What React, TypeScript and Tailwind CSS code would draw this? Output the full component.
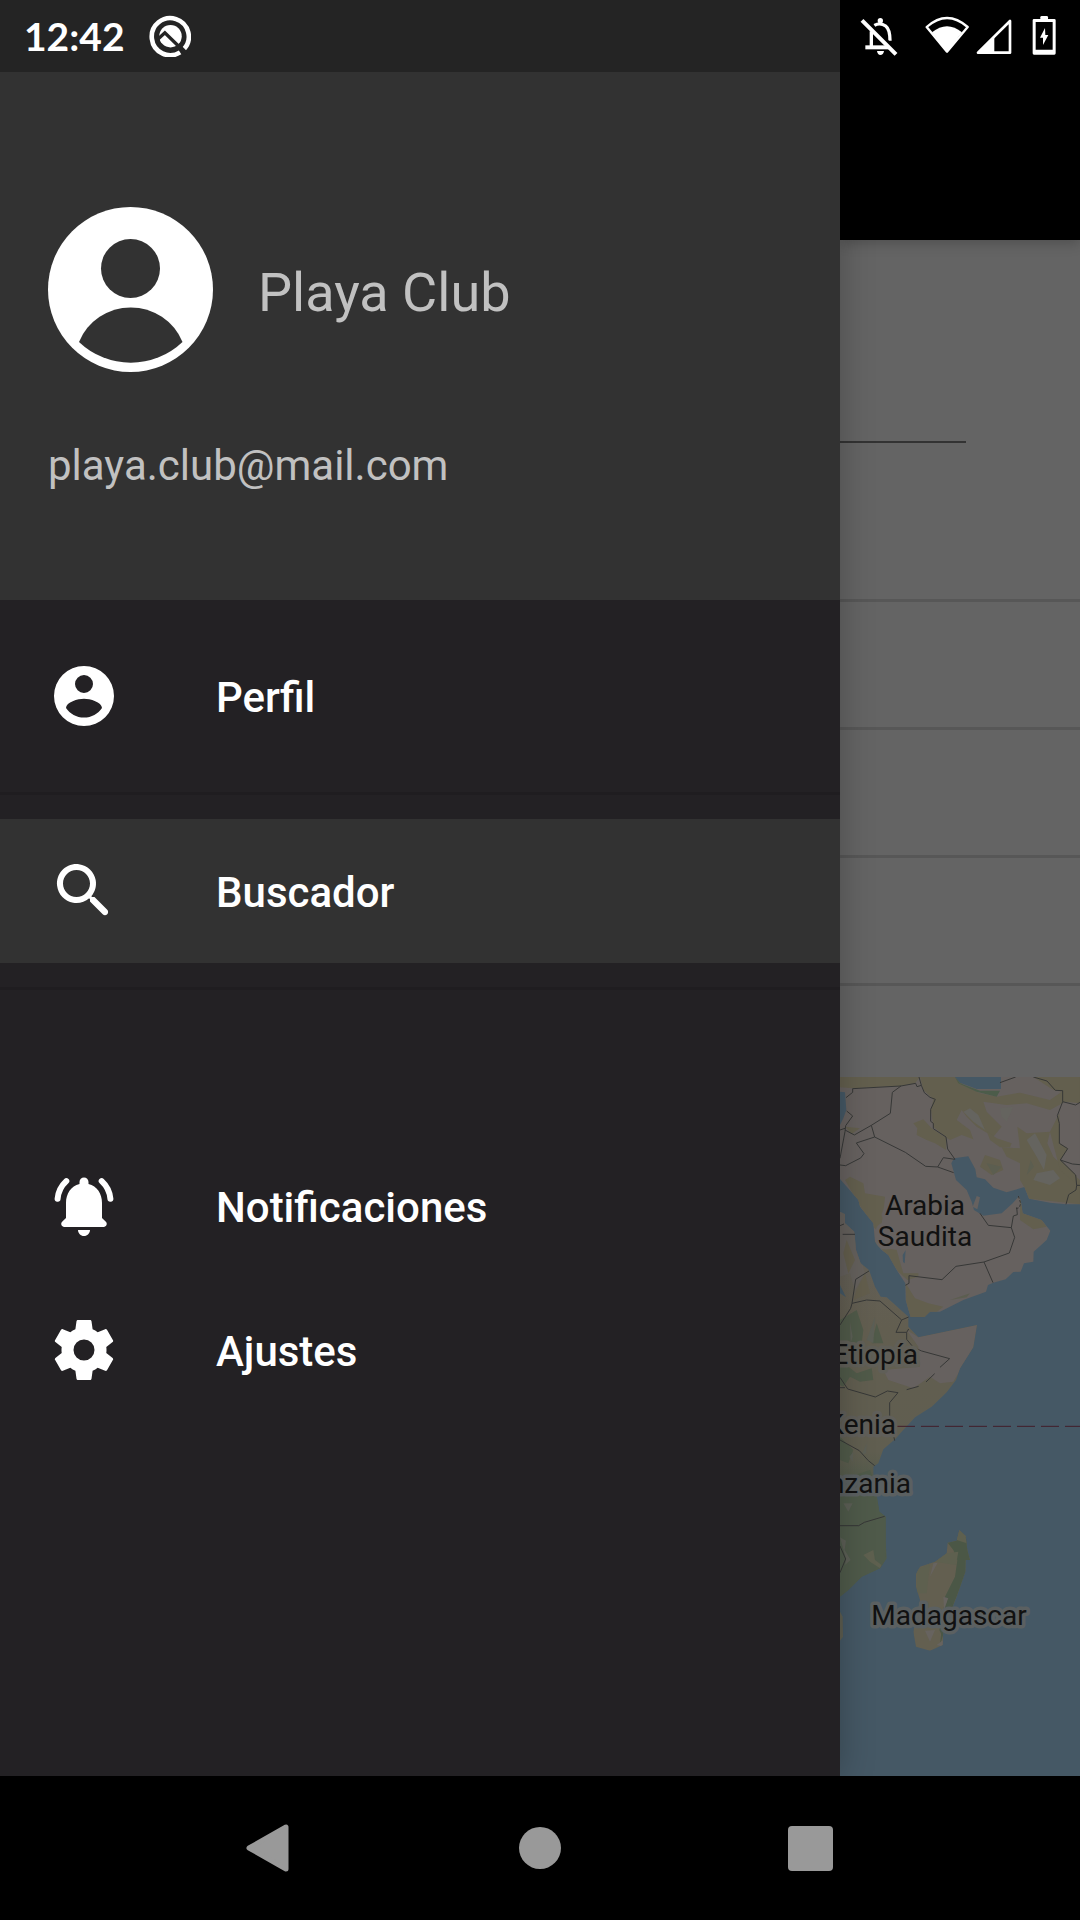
import type { ReactNode } from "react";

function AssistantIcon() {
  return (
    <svg viewBox="443 43 127 127" className="size-[42px]" fill="none" aria-hidden="true">
      <path d="M548 147 A56 56 0 1 0 537 156" stroke="#fff" strokeWidth="14" />
      <circle cx="508" cy="107" r="34" fill="#fff" />
      <path d="M468 118 L491 97 L556 160" stroke="#242424" strokeWidth="10" />
      <path d="M538 141 L556 159" stroke="#242424" strokeWidth="12" />
    </svg>
  );
}

function MutedBellIcon() {
  return (
    <svg viewBox="122 48 114 120" className="h-10 w-[38px]" fill="none" stroke="#fff" aria-hidden="true">
      <path d="M156 94 V138 M165 76 Q183 66 199 78 Q212 88 212 122" strokeWidth="10" />
      <path d="M138 142 H208" strokeWidth="12" />
      <circle cx="183" cy="62" r="8" fill="#fff" stroke="none" />
      <path d="M173 153 H194 Q192 165 183 165 Q175 165 173 153Z" fill="#fff" stroke="none" />
      <path d="M136 56 L236 156" stroke="#000" strokeWidth="9" />
      <path d="M128 61 L230 163" strokeWidth="12" />
    </svg>
  );
}

function WifiIcon() {
  return (
    <svg viewBox="316 48 132 120" className="h-10 w-11" aria-hidden="true">
      <path d="M321 81 Q382 27 444 81 L382 155Z" fill="none" stroke="#fff" strokeWidth="7" strokeLinejoin="round" />
      <path d="M337 97 Q382 60 427 97 L382 156Z" fill="#fff" />
    </svg>
  );
}

function SignalIcon() {
  return (
    <svg viewBox="468 48 108 120" className="h-10 w-9" aria-hidden="true">
      <path d="M474 158 L570 63 V158Z" fill="none" stroke="#fff" strokeWidth="8" strokeLinejoin="round" />
      <path d="M474 158 L523 109 V158Z" fill="#fff" />
    </svg>
  );
}

function BatteryIcon() {
  return (
    <svg viewBox="637 48 72 120" className="h-10 w-6" aria-hidden="true">
      <path d="M662 60 V52 Q662 48 666 48 H681 Q685 48 685 52 V60Z" fill="#fff" />
      <path
        fillRule="evenodd"
        d="M643 57 H704 Q708 57 708 61 V160 Q708 164 704 164 H643 Q639 164 639 160 V61 Q639 57 643 57Z M648 66 V149 H699 V66Z"
        fill="#fff"
      />
      <path d="M676 84 L661 113 H670 V135 L686 105 H677Z" fill="#fff" />
    </svg>
  );
}

function Avatar() {
  return (
    <svg viewBox="0 0 165 165" className="size-[165px] shrink-0" role="img" aria-label="Avatar">
      <circle cx="82.5" cy="82.5" r="82.5" fill="#fff" />
      <circle cx="82.5" cy="61.5" r="29.5" fill="#323232" />
      <path d="M31 135 A56 56 0 0 1 134.500 135 A75 75 0 0 1 31 135Z" fill="#323232" />
    </svg>
  );
}

function MenuIcon({ children }: { children: ReactNode }) {
  return (
    <svg viewBox="0 0 24 24" className="size-[72px] shrink-0" fill="currentColor" aria-hidden="true">
      {children}
    </svg>
  );
}

function MenuItem({ label, active, children }: { label: string; active?: boolean; children: ReactNode }) {
  return (
    <button
      type="button"
      aria-current={active ? "page" : undefined}
      className={`flex h-36 w-full items-center gap-24 px-12 text-left text-[42px] leading-[48px] font-medium text-white ${
        active ? "bg-[#323232]" : ""
      }`}
    >
      <MenuIcon>{children}</MenuIcon>
      <span className="pt-1">{label}</span>
    </button>
  );
}

function Divider() {
  return <hr className="my-6 h-[3px] border-0 bg-[#1f1d20]" />;
}

function WorldMap() {
  return (
    <svg
      viewBox="0 0 240 699"
      preserveAspectRatio="xMinYMin slice"
      className="min-h-[600px] w-full flex-1 bg-[#455865]"
      role="img"
      aria-label="Mapa"
    >
      <defs>
        <clipPath id="asia">
          <path d="M60 51 H780 V433 L738 433 L690 428 L627 416 L613 381 L560 397 L520 383 L495 358 L470 352 L466 328 L445 289 L402 295 L394 310 L408 360 L440 390 L455 425 L462 450 L490 467 L545 460 L578 430 L597 408 L603 425 L608 460 L665 480 L691 512 L680 540 L641 575 L640 605 L612 610 L602 635 L580 636 L557 658 L520 668 L504 675 L498 695 L430 720 L360 755 L330 755 L313 772 L272 772 L257 720 L256 670 L230 630 L205 585 L185 570 L165 545 L160 490 L120 440 L115 420 L60 357Z" />
        </clipPath>
        <clipPath id="africa">
          <path d="M60 455 L75 462 V490 L103 515 L108 570 L122 610 L147 630 L165 680 L182 710 L200 712 L265 770 V800 L295 832 L471 795 L460 862 L420 925 L408 960 L380 997 L335 1040 L285 1072 L245 1115 L225 1138 L190 1168 L175 1210 L160 1220 L160 1240 L172 1320 L178 1355 L197 1370 L197 1450 L200 1495 L180 1525 L125 1550 L85 1590 L60 1610Z" />
        </clipPath>
        <clipPath id="madagascar">
          <path d="M418 1410 L437 1428 L442 1470 L450 1500 H437 L436 1535 L410 1610 L370 1710 L368 1755 L330 1772 L288 1760 L280 1715 L300 1620 L288 1580 V1542 L300 1520 L345 1505 L380 1480 L383 1448 L410 1442Z" />
        </clipPath>
        <linearGradient id="africaLand" x1="0" y1="0" x2="0" y2="1">
          <stop offset="0" stopColor="#64605b" />
          <stop offset="0.3" stopColor="#625e50" />
          <stop offset="0.62" stopColor="#605e50" />
          <stop offset="0.72" stopColor="#4f5a4a" />
          <stop offset="1" stopColor="#515b49" />
        </linearGradient>
      </defs>
      <g transform="translate(-20 -17) scale(0.333333)">
        <g clipPath="url(#asia)">
          <rect x="60" y="51" width="720" height="740" fill="#66615f" />
          <g fill="#635f4e">
            <path d="M60 51 H300 L285 70 L240 78 L180 80 L100 85 L60 82Z" />
            <path d="M300 51 H405 L430 75 L480 100 L530 110 L600 98 L690 120 L725 95 L700 90 L640 51 H780 V130 L735 125 L690 150 L620 130 L560 135 L490 125 L500 155 L545 200 L520 230 L470 200 L440 170 L425 150 L410 180 L450 210 L460 238 L425 225 L390 240 L375 230 L340 200 L333 150 L340 118 L310 90Z" />
            <path d="M280 190 L310 178 L335 205 L380 235 L378 270 L345 250 L320 240 L290 225 L292 205Z" />
            <path d="M500 212 L530 235 L575 250 L570 262 L540 262 L510 240Z" />
            <path d="M592 200 L620 220 L690 215 L682 250 L700 290 L730 320 L780 360 V433 L627 416 L612 380 L600 360 V310 L560 290 L545 262 L600 265Z" />
            <path d="M690 215 L718 160 V250 L744 265 L722 300 L768 345 L780 380 L720 330Z" />
            <path d="M495 285 L540 300 L550 330 L515 345 L480 320Z" />
            <path d="M75 360 L90 350 L130 370 L135 400 L195 410 L190 460 L180 520 L160 500 L115 430Z" />
            <path d="M180 560 L230 570 L250 640 L295 640 V650 L262 660 L235 635Z" />
            <path d="M257 670 L285 715 L325 730 L370 740 L330 772 H260Z" />
            <path d="M600 410 L610 460 L665 480 L680 500 L640 508 L600 480Z" />
            <path d="M75 200 L120 205 L95 222Z" />
          </g>
          <g fill="#65645f">
            <path d="M620 240 L645 220 L680 285 L672 330 L650 290Z" />
            <path d="M650 340 L700 330 L720 355 L690 375 L640 360Z" />
            <path d="M430 155 L450 145 L475 165 L495 210 L460 185Z" />
            <path d="M540 145 L580 140 L560 185 L545 170Z" />
          </g>
          <path d="M500 310 L545 320 L520 345Z M620 345 L632 300 L642 320Z M390 720 L450 700 L440 712Z" fill="#5c5e50" />
          <path d="M405 51 H543 V87 H470 L420 68Z M60 95 L75 97 L79 150 L70 175 L60 195Z M248 585 L257 570 L254 610 L249 606Z" fill="#455865" />
          <path d="M405 51 L420 70 L480 92 L540 92 L530 110 L470 95 L415 70Z" fill="#4c5c4a" />
        </g>
        <g clipPath="url(#africa)">
          <rect x="60" y="450" width="420" height="1170" fill="url(#africaLand)" />
          <path d="M60 450 L100 510 L135 640 L105 690 L90 640 L60 650Z" fill="#64605c" />
          <path d="M80 540 L105 600 L85 640 L70 580Z M135 640 L150 700 L100 720 L110 690Z" fill="#635e4d" />
          <path d="M260 810 L295 832 L471 795 L460 862 L400 965 L360 970 L330 950 L280 985 L205 960 L190 930 L300 920 L295 860Z" fill="#66615f" />
          <path d="M60 780 L110 750 L130 810 L125 850 H60Z M155 850 L170 790 L190 850Z M60 900 L110 940 L155 925 L160 960 L120 965 L90 950 L70 980 L60 975Z M60 1130 L100 1170 L85 1210 L60 1200Z" fill="#505a49" />
          <path d="M60 1260 L150 1230 L200 1370 L197 1530 L60 1610Z" fill="#4f5a4a" />
          <path d="M90 785 L98 830 L92 850Z M140 840 L165 770 L160 850Z M70 1330 L98 1330 L85 1355Z M60 1432 L78 1442 L74 1470 L92 1500 L75 1515 L78 1497Z M88 1190 L100 1175 L98 1205Z M125 1185 L140 1150 L138 1180Z" fill="#5c5f56" />
          <path d="M130 1485 L160 1470 L165 1500 L185 1515 L180 1525 L150 1505Z" fill="#5e604f" />
          <path d="M60 675 L78 712 L60 700Z" fill="#455865" />
        </g>
        <g clipPath="url(#madagascar)">
          <rect x="270" y="1400" width="190" height="380" fill="#635f50" />
          <path d="M383 1448 L440 1430 L455 1505 L430 1560 L390 1660 L360 1755 L375 1610 L405 1550 L412 1500 L400 1470Z" fill="#4b5746" />
          <path d="M410 1405 H440 V1450 L410 1440Z M345 1505 L380 1480 L415 1475 L408 1515Z M290 1530 L330 1510 L320 1600 H290Z" fill="#5e604f" />
          <path d="M340 1510 L353 1508 L330 1550Z M315 1712 L345 1710 L330 1745Z M370 1610 L385 1615 L372 1650Z M350 1755 L370 1740 V1760Z" fill="#67635f" />
          <path d="M385 1615 L400 1640 L365 1725 L358 1710Z" fill="#4b5746" />
        </g>
        <path d="M60 1655 L68 1670 L69 1730 L60 1742Z" fill="#5e5e50" />
        <path d="M458 440 L470 408 L480 412 L472 448Z" fill="#66615f" />
        <g fill="none" stroke="#363736" strokeWidth="3">
          <path d="M78 113 L98 97 V86 L243 78 L217 97 L211 160 L154 196 L103 225 L75 210 M243 78 L287 70 L291 80 L304 76 L297 51 M304 76 L313 98 L330 112 L346 118 L332 148 V184 L340 190 V206 L378 231 L383 267 L405 298 L370 293 L353 321 L317 319 L256 277 L164 231 L154 196 M353 321 L401 338 M164 231 L109 249 L132 281 L122 294 L77 317 L60 315 M80 153 L98 168 L77 197 L75 215 L60 295 M60 210 L75 205" />
          <path d="M540 68 L587 51 M640 51 L681 63 L706 91 L728 92 V125 L712 167 L718 190 V250 L743 266 L721 300 L767 345 L770 376 H780 M770 376 L768 390 L746 404 L738 433 M728 125 L767 135 L780 127 M721 300 L757 312 L780 314" />
          <path d="M480 460 L505 496 L574 503 L584 532 L568 579 L492 606 L408 619 L366 659 L267 647 V670 L256 676 M492 606 L519 668 M574 503 L580 468 L592 464 L590 442" />
          <path d="M595 408 L602 430 L598 443 L588 446" strokeDasharray="8 5" />
          <path d="M60 497 L72 492 M68 523 H105 M147 633 L107 658 L96 730 L92 745 L60 795 M96 730 L140 720 L180 723 L245 780 L266 771 M245 780 L228 817 H260 L266 807 M260 817 V838 L280 862 L305 873 L389 896" />
          <path d="M389 896 L360 922 M344 941 L318 966 M296 979 L260 989" />
          <path d="M60 952 L83 987 L166 1011 L202 993 L234 998 L209 1028 V1070 L224 1142 M60 983 H75 M60 1140 L118 1172 L145 1202 L164 1217 M60 1397 H116 L133 1387 L194 1369 M60 1458 L77 1497 L60 1538" />
        </g>
        <path d="M87 1099 H780" fill="none" stroke="#421d2a" strokeWidth="3" strokeDasharray="54 18" />
      </g>
      <g
        className="text-[28px]"
        fill="#111"
        stroke="#5b6061"
        strokeWidth="7"
        strokeLinejoin="round"
        paintOrder="stroke"
        textAnchor="middle"
      >
        <text x="85" y="138" stroke="#66615f">Arabia</text>
        <text x="85" y="169" stroke="#66615f">Saudita</text>
        <text x="78" y="287" textAnchor="end" stroke="#605f58">Etiopía</text>
        <text x="56" y="357" textAnchor="end" stroke="#605f5a">Kenia</text>
        <text x="71" y="416" textAnchor="end">Tanzania</text>
        <text x="109" y="548">Madagascar</text>
      </g>
    </svg>
  );
}

function Drawer() {
  return (
    <aside className="relative z-10 w-7/9 shrink-0 bg-[#232124] shadow-[0_0_32px_rgba(0,0,0,0.25)]">
      <div className="flex h-[72px] items-center gap-6 bg-[#242424] px-6">
        <time className="font-['Lato'] text-[39px] leading-[48px] font-bold text-white">12:42</time>
        <AssistantIcon />
      </div>
      <header className="h-[528px] bg-[#323232] px-12 pt-[135px] text-[#c1c1c1]">
        <div className="flex items-center gap-[45px]">
          <Avatar />
          <h1 className="pt-1.5 text-[54px] leading-[64px]">Playa Club</h1>
        </div>
        <p className="mt-[69px] text-[42px] leading-[50px]">playa.club@mail.com</p>
      </header>
      <nav className="pt-6" aria-label="Menú">
        <MenuItem label="Perfil">
          <path d="M12,19.2C9.5,19.2 7.29,17.92 6,16C6.03,14 10,12.9 12,12.9C14,12.9 17.97,14 18,16C16.71,17.92 14.5,19.2 12,19.2M12,5A3,3 0 0,1 15,8A3,3 0 0,1 12,11A3,3 0 0,1 9,8A3,3 0 0,1 12,5M12,2A10,10 0 0,0 2,12A10,10 0 0,0 12,22A10,10 0 0,0 22,12A10,10 0 0,0 12,2Z" />
        </MenuItem>
        <Divider />
        <MenuItem label="Buscador" active>
          <path d="M15.5 14h-.79l-.28-.27c1.2-1.4 1.82-3.31 1.48-5.34-.47-2.78-2.79-5-5.59-5.34-4.23-.52-7.79 3.04-7.27 7.27.34 2.8 2.56 5.12 5.34 5.59 2.03.34 3.94-.28 5.34-1.48l.27.28v.79l4.25 4.25c.41.41 1.08.41 1.49 0 .41-.41.41-1.08 0-1.49L15.5 14zm-6 0C7.01 14 5 11.99 5 9.5S7.01 5 9.5 5 14 7.01 14 9.5 11.99 14 9.5 14z" />
        </MenuItem>
        <Divider />
        <div className="pt-30">
          <MenuItem label="Notificaciones">
            <path d="M12 22c1.100 0 2-.9 2-2h-4c0 1.100.9 2 2 2zM18 16v-5c0-3.070-1.630-5.640-4.500-6.320V4c0-.830-.670-1.500-1.500-1.500s-1.500.670-1.500 1.500v.680C7.640 5.360 6 7.920 6 11v5l-1.290 1.290c-.630.630-.190 1.710.7 1.710h13.170c.890 0 1.340-1.080.710-1.710L18 16z" />
            <path
              d="M6.100 3.700 Q3.500 6.100 3.200 9.600 M17.900 3.700 Q20.500 6.100 20.800 9.600"
              fill="none"
              stroke="currentColor"
              strokeWidth="2"
              strokeLinecap="round"
            />
          </MenuItem>
          <MenuItem label="Ajustes">
            <path d="M12,15.5A3.5,3.5 0 0,1 8.5,12A3.5,3.5 0 0,1 12,8.5A3.5,3.5 0 0,1 15.5,12A3.5,3.5 0 0,1 12,15.5M19.43,12.97C19.47,12.65 19.5,12.33 19.5,12C19.5,11.67 19.47,11.34 19.43,11L21.54,9.37C21.73,9.22 21.78,8.95 21.66,8.73L19.66,5.27C19.54,5.05 19.27,4.96 19.05,5.05L16.56,6.05C16.04,5.66 15.5,5.32 14.87,5.07L14.5,2.42C14.46,2.18 14.25,2 14,2H10C9.75,2 9.54,2.18 9.5,2.42L9.13,5.07C8.5,5.32 7.96,5.66 7.44,6.05L4.95,5.05C4.73,4.96 4.46,5.05 4.34,5.27L2.34,8.73C2.21,8.95 2.27,9.22 2.46,9.37L4.57,11C4.53,11.34 4.5,11.67 4.5,12C4.5,12.33 4.53,12.65 4.57,12.97L2.46,14.63C2.27,14.78 2.21,15.05 2.34,15.27L4.34,18.73C4.46,18.95 4.73,19.03 4.95,18.95L7.44,17.94C7.96,18.34 8.5,18.68 9.13,18.93L9.5,21.58C9.54,21.82 9.75,22 10,22H14C14.25,22 14.46,21.82 14.5,21.58L14.87,18.93C15.5,18.67 16.04,18.34 16.56,17.94L19.05,18.95C19.27,19.03 19.54,18.95 19.66,18.73L21.66,15.27C21.78,15.05 21.73,14.78 21.54,14.63L19.43,12.97Z" />
          </MenuItem>
        </div>
      </nav>
    </aside>
  );
}

function DimmedPage() {
  return (
    <main className="flex min-w-0 flex-1 flex-col bg-[#646464]">
      <div className="relative h-60 bg-black shadow-[0_4px_12px_rgba(0,0,0,0.2)]">
        <div className="flex h-[72px] items-center justify-end pr-6">
          <MutedBellIcon />
          <div className="ml-[27px] flex gap-[7px]">
            <WifiIcon />
            <SignalIcon />
          </div>
          <div className="ml-5">
            <BatteryIcon />
          </div>
        </div>
      </div>
      <div className="h-[203px] pr-[114px]">
        <div className="h-full border-b-2 border-[#333333]" />
      </div>
      <div className="h-[159px] border-b-[3px] border-[#575757]" />
      <div className="h-32 border-b-[3px] border-[#575757]" />
      <div className="h-32 border-b-[3px] border-[#575757]" />
      <div className="h-32 border-b-[3px] border-[#575757]" />
      <div className="h-[91px]" />
      <WorldMap />
    </main>
  );
}

function SystemNav() {
  return (
    <nav className="relative z-20 flex h-36 items-center justify-center bg-black" aria-label="Sistema">
      <button type="button" aria-label="Atrás" className="flex h-full w-1/4 items-center justify-center">
        <svg viewBox="0 0 48 48" className="size-12" aria-hidden="true">
          <path d="M3 24 L40 3 V45Z" fill="#999" stroke="#999" strokeWidth="5" strokeLinejoin="round" />
        </svg>
      </button>
      <button type="button" aria-label="Inicio" className="flex h-full w-1/4 items-center justify-center">
        <span className="size-[42px] rounded-full bg-[#999]" />
      </button>
      <button type="button" aria-label="Recientes" className="flex h-full w-1/4 items-center justify-center">
        <span className="size-[45px] rounded bg-[#999]" />
      </button>
    </nav>
  );
}

export default function App() {
  return (
    <div className="flex min-h-screen flex-col bg-black font-['Roboto',sans-serif]">
      <div className="flex flex-1 overflow-hidden">
        <Drawer />
        <DimmedPage />
      </div>
      <SystemNav />
    </div>
  );
}
